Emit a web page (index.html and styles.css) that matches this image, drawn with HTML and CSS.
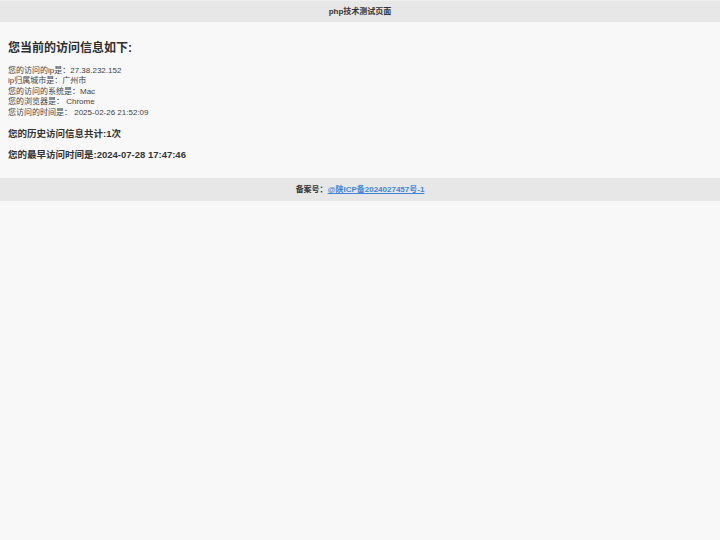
FILE: index.html
```html
<!DOCTYPE html>
<html lang="zh-CN">
<head>
<meta charset="utf-8">
<title>php技术测试页面</title>
<link rel="stylesheet" href="styles.css">
</head>
<body>
<header class="top-bar">php技术测试页面</header>
<main class="content">
  <h2 class="title">您当前的访问信息如下:</h2>
  <div class="info">
    <div class="info-line">您的访问的ip是：27.38.232.152</div>
    <div class="info-line">ip归属城市是：广州市</div>
    <div class="info-line">您的访问的系统是：Mac</div>
    <div class="info-line">您的浏览器是： Chrome</div>
    <div class="info-line">您访问的时间是： 2025-02-26 21:52:09</div>
  </div>
  <p class="stat stat-first">您的历史访问信息共计:1次</p>
  <p class="stat">您的最早访问时间是:2024-07-28 17:47:46</p>
</main>
<footer class="bottom-bar">备案号：<a class="icp" href="#">@陕ICP备2024027457号-1</a></footer>
</body>
</html>
```
FILE: styles.css
```css
html, body {
  margin: 0;
  padding: 0;
}
body {
  background: #f8f8f8;
  color: #333333;
  font-family: "Liberation Sans", Arial, "Noto Sans CJK SC", sans-serif;
}
.top-bar {
  height: 22px;
  line-height: 22px;
  background: #e7e7e7;
  text-align: center;
  font-size: 8px;
  font-weight: bold;
  color: #333;
  border-top: 1px solid #efefef;
  box-sizing: border-box;
}
.content {
  padding: 18px 8px 0;
}
.title {
  margin: 0;
  font-size: 12px;
  line-height: 16px;
  font-weight: bold;
  color: #2e2e2e;
}
.info {
  margin-top: 10px;
  font-size: 8px;
  line-height: 10.4px;
  color: #444;
}
.stat {
  margin: 8.5px 0 0;
  font-size: 9.5px;
  line-height: 12px;
  font-weight: bold;
  color: #333;
}
.stat-first {
  margin-top: 10px;
}
.bottom-bar {
  margin-top: 17.5px;
  height: 23px;
  line-height: 23px;
  background: #e7e7e7;
  text-align: center;
  font-size: 8px;
  font-weight: bold;
  color: #333;
}
.icp {
  color: #3f86d8;
  text-decoration: underline;
}
```
